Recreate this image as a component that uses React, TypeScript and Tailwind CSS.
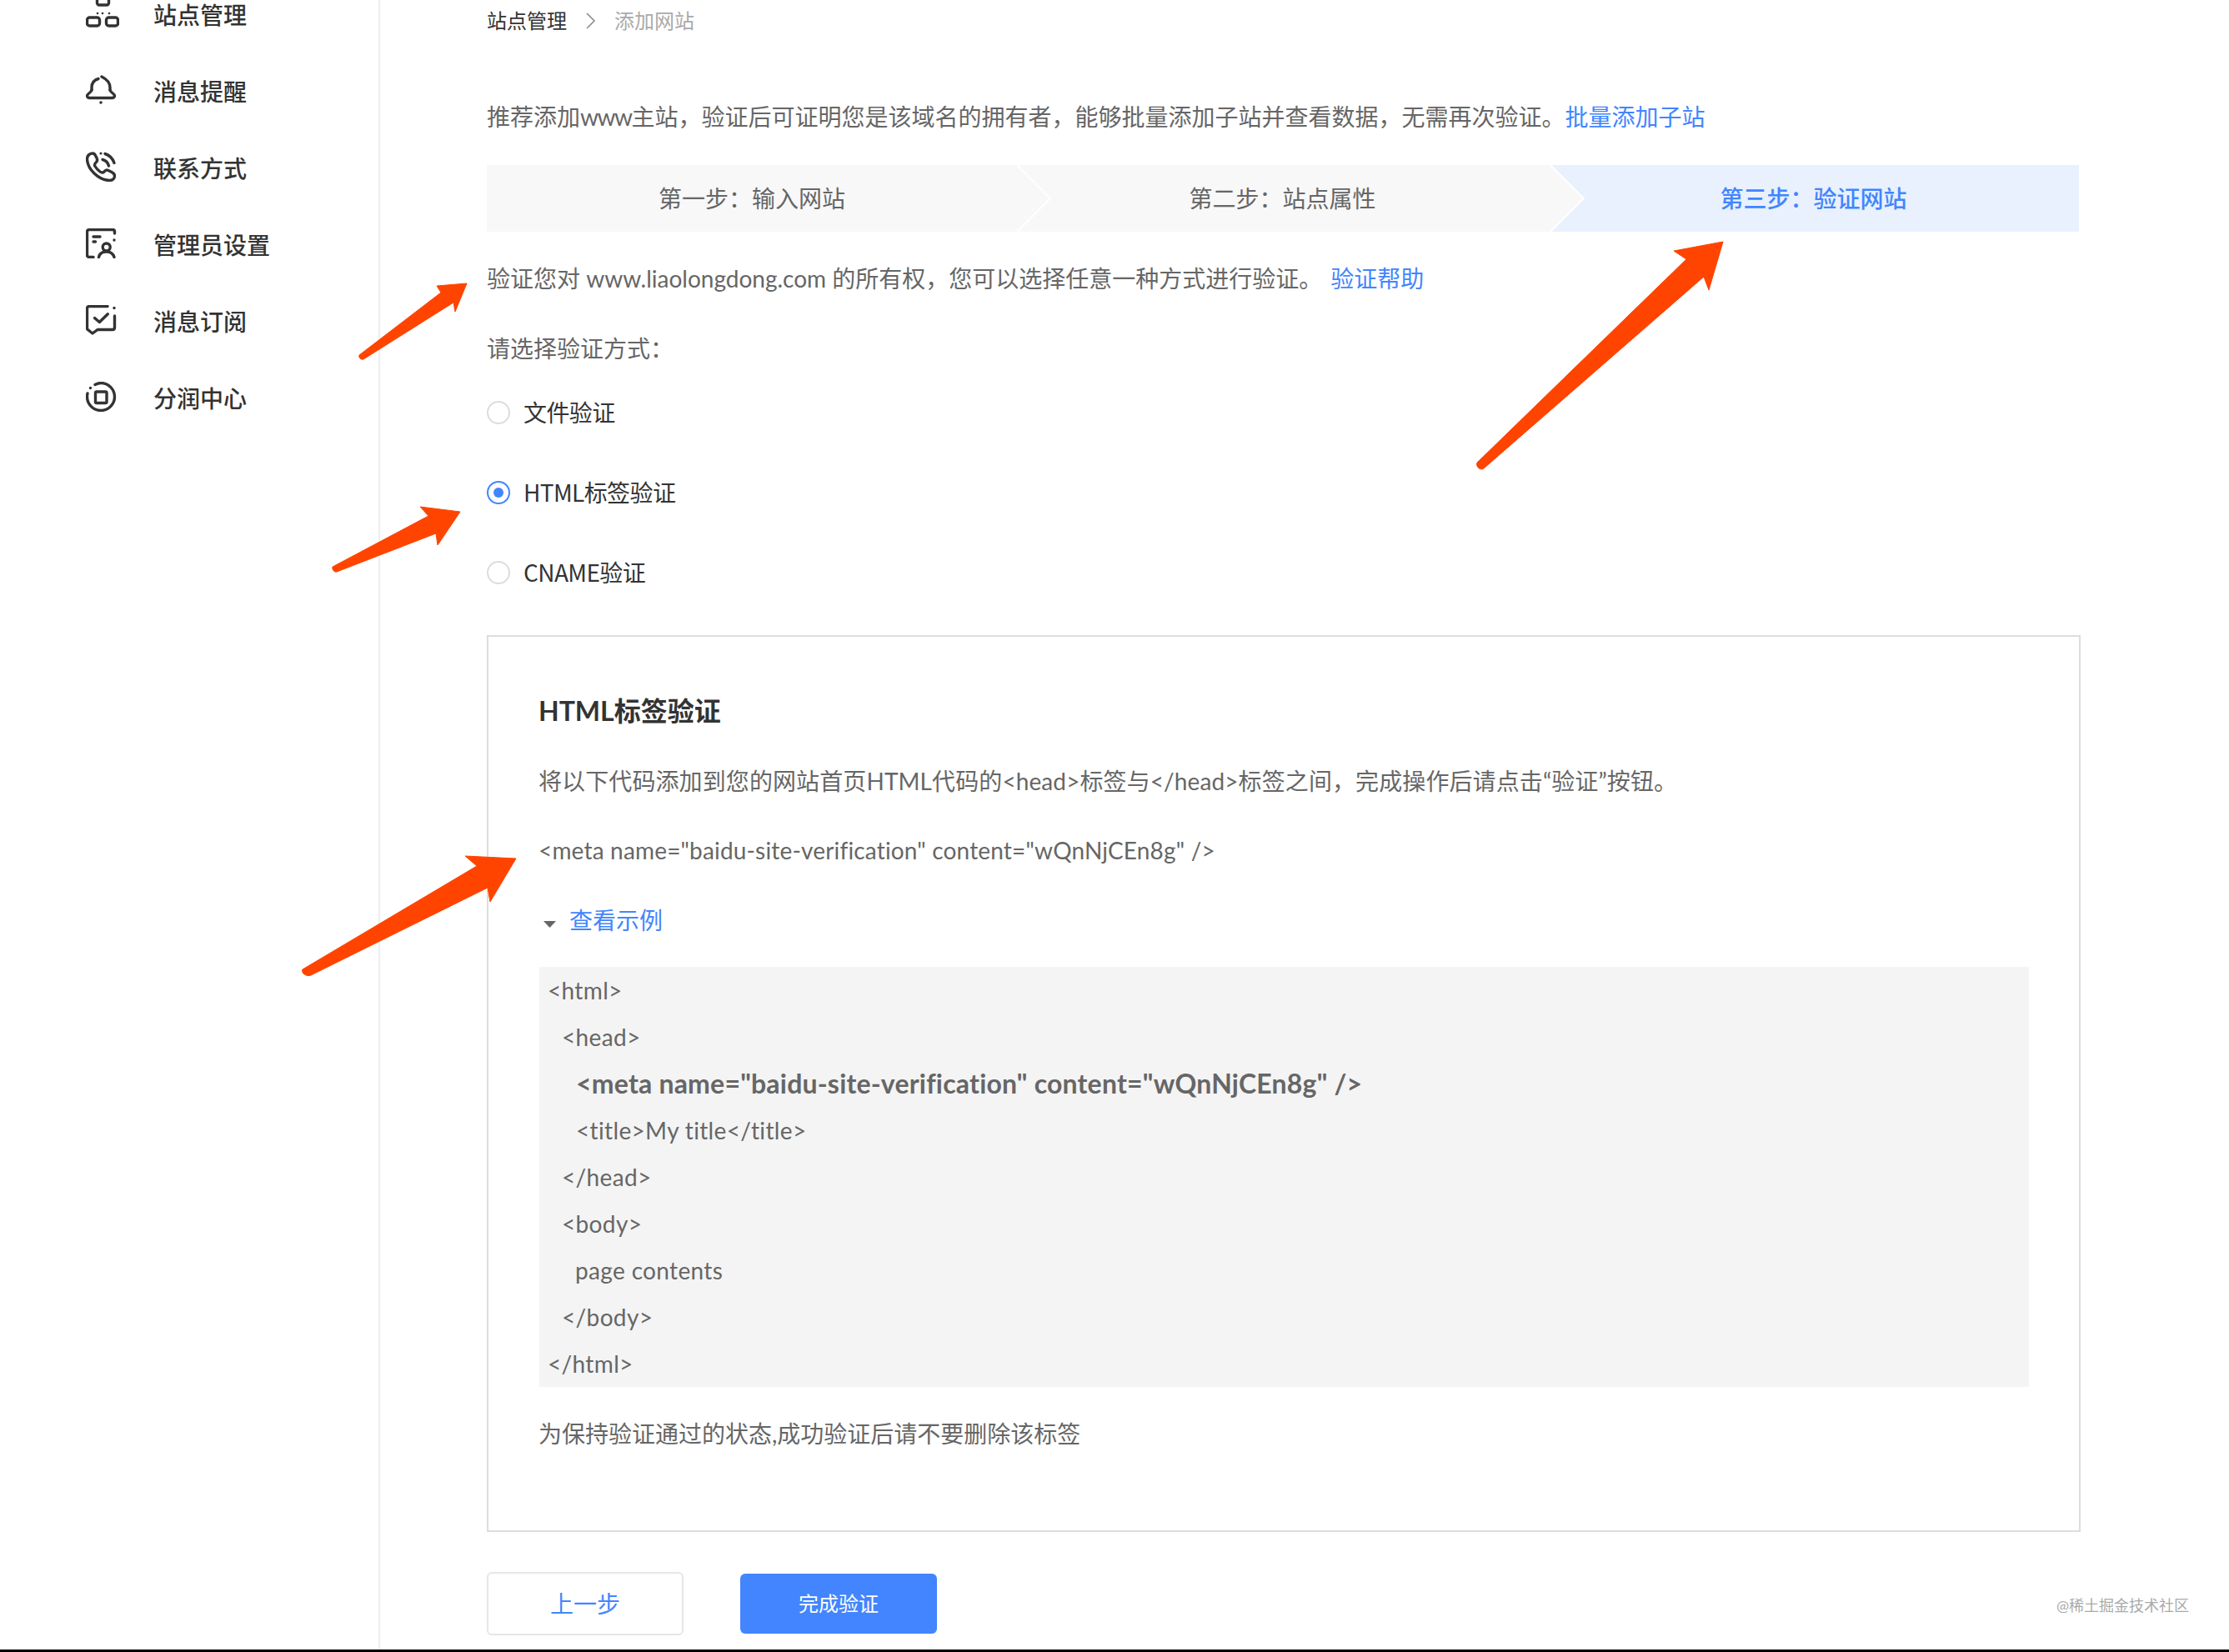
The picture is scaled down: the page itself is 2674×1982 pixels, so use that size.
import { ReactNode } from "react";

const iconClass = "fill-none stroke-[#333333] [stroke-width:3.4] [stroke-linecap:round] [stroke-linejoin:round]";

function SiteIcon() {
  return (
    <svg width="40" height="36" viewBox="0 0 40 36" className={iconClass}>
      <rect x="13.5" y="-1" width="14" height="9" rx="2.5" />
      <rect x="1.5" y="23" width="15" height="10" rx="3" />
      <rect x="24.5" y="23" width="14" height="10" rx="3" />
      <circle cx="14" cy="18" r="1.3" className="fill-[#333333] stroke-none" />
      <circle cx="20" cy="18" r="1.3" className="fill-[#333333] stroke-none" />
      <circle cx="28" cy="18" r="1.3" className="fill-[#333333] stroke-none" />
    </svg>
  );
}

function BellIcon() {
  return (
    <svg width="40" height="36" viewBox="0 0 40 36" className={iconClass}>
      <path d="M7 18 V15 C7 9 10 6 15 4.5" />
      <path d="M19 2 C25 5 29 9 29 15 V18" />
      <path d="M7 18 C7 21 1.5 22 1.5 25 C1.5 26.5 3 27.5 4.5 27.5 H31.5 C33 27.5 34.5 26.5 34.5 25 C34.5 22 29 21 29 18" />
      <circle cx="18" cy="33" r="1.8" className="fill-[#333333] stroke-none" />
    </svg>
  );
}

function PhoneIcon() {
  return (
    <svg width="40" height="36" viewBox="0 0 40 36" className={iconClass}>
      <path d="M8 2 C4 2 1.5 5 1.5 9 C2 21 15 34 28 34.5 C32 34.5 34.5 32 34.5 29 C34.5 27 33 25.5 31 24.5 L27 22.5 C25 21.5 23.5 22 22 24 C20.5 25.5 19 25.5 17 24 C14.5 22 12.5 20 11 17.5 C10 15.5 10.5 14 12.5 12.5 C14 11 14 9.5 13 7.5 L11.5 4.5 C10.8 3 9.5 2 8 2 Z" />
      <path d="M20 9.5 C24 10.5 26.5 13 27.5 17" />
      <path d="M23 2.5 C28 4 32 8 34 13.5" />
      <circle cx="18" cy="2" r="1.6" className="fill-[#333333] stroke-none" />
    </svg>
  );
}

function AdminIcon() {
  return (
    <svg width="40" height="36" viewBox="0 0 40 36" className={iconClass}>
      <path d="M9 34.5 H4 C2.5 34.5 1.5 33.5 1.5 32 V4 C1.5 2.5 2.5 1.5 4 1.5 H32 C33.5 1.5 34.5 2.5 34.5 4 V6" />
      <path d="M9 10 H17" />
      <path d="M9 16 H11.5" />
      <circle cx="24.7" cy="22.5" r="4.5" />
      <path d="M15.5 34.5 C16.5 30 20 28 24.7 28 C29 28 32.5 30 34 34.5" />
      <circle cx="34" cy="14" r="1.7" className="fill-[#333333] stroke-none" />
    </svg>
  );
}

function SubscribeIcon() {
  return (
    <svg width="40" height="36" viewBox="0 0 40 36" className={iconClass}>
      <path d="M26 1.5 H4 C2.5 1.5 1.5 2.5 1.5 4 V28 C1.5 29 2 29.5 3 30 L8 34 L14 29.5 H32 C33.5 29.5 34.5 28.5 34.5 27 V13" />
      <path d="M10.5 15.5 L16.3 20.5 L26.3 10.7" />
      <circle cx="34" cy="3.5" r="1.7" className="fill-[#333333] stroke-none" />
    </svg>
  );
}

function ShareIcon() {
  return (
    <svg width="40" height="36" viewBox="0 0 40 36" className={iconClass}>
      <path d="M11 3.5 C14 2 16 1.5 18 1.5 C27 1.5 34.5 9 34.5 18 C34.5 27 27 34.5 18 34.5 C9 34.5 1.5 27 1.5 18 C1.5 16.5 1.7 15 2 14" />
      <rect x="11.5" y="12" width="13.5" height="13.5" rx="1.5" />
      <circle cx="5.5" cy="7.5" r="1.7" className="fill-[#333333] stroke-none" />
    </svg>
  );
}

const navItems: { label: string; icon: ReactNode }[] = [
  { label: "站点管理", icon: <SiteIcon /> },
  { label: "消息提醒", icon: <BellIcon /> },
  { label: "联系方式", icon: <PhoneIcon /> },
  { label: "管理员设置", icon: <AdminIcon /> },
  { label: "消息订阅", icon: <SubscribeIcon /> },
  { label: "分润中心", icon: <ShareIcon /> },
];

const steps = [
  { label: "第一步：输入网站", active: false, chevron: true, width: "w-[636px]" },
  { label: "第二步：站点属性", active: false, chevron: true, width: "w-[640px] pr-[3px]" },
  { label: "第三步：验证网站", active: true, chevron: false, width: "w-[634px] pr-[3px]" },
];

const methods = [
  { label: "文件验证", checked: false },
  { label: "HTML标签验证", checked: true },
  { label: "CNAME验证", checked: false },
];

const codeLines = [
  { text: "<html>", cls: "" },
  { text: "<head>", cls: "pl-[17px]" },
  { text: '<meta name="baidu-site-verification" content="wQnNjCEn8g" />', cls: "pl-[34px] text-[32px] font-bold tracking-[0.2px]" },
  { text: "<title>My title</title>", cls: "pl-[34px]" },
  { text: "</head>", cls: "pl-[17px]" },
  { text: "<body>", cls: "pl-[17px]" },
  { text: "page contents", cls: "pl-[33px]" },
  { text: "</body>", cls: "pl-[17px]" },
  { text: "</html>", cls: "" },
];

function Sidebar() {
  return (
    <aside className="w-[456px] shrink-0 border-r-2 border-[#eeeeee] pl-[103px] -mt-[28px]">
      {navItems.map(item => (
        <div key={item.label} className="flex h-[92px] items-center">
          <span className="w-[81px] -mt-[4px] shrink-0">{item.icon}</span>
          <span className="pb-[1px] text-[28px] font-medium leading-[32px] text-[#333333]">{item.label}</span>
        </div>
      ))}
    </aside>
  );
}

function Steps() {
  return (
    <div className="flex h-[80px] w-[1910px]">
      {steps.map(step => (
        <div
          key={step.label}
          className={`relative flex items-center justify-center pb-[1px] text-[28px] ${step.width} ${
            step.active ? "bg-[#e8f1fd] font-medium text-[#4285ff]" : "bg-[#f8f8f8] text-[#666666]"
          }`}
        >
          {step.label}
          {step.chevron && (
            <svg width="42" height="80" viewBox="0 0 42 80" className="absolute left-full top-0 z-10">
              <path d="M0 0 L40 40 L0 80 Z" fill="#f8f8f8" />
              <path d="M0 0 L40 40 L0 80" fill="none" stroke="#ffffff" strokeWidth="2" />
            </svg>
          )}
        </div>
      ))}
    </div>
  );
}

function Radio({ checked }: { checked: boolean }) {
  return (
    <span
      className={`flex h-[28px] w-[28px] items-center justify-center rounded-full border-2 ${
        checked ? "border-[#4285ff]" : "border-[#dddddd]"
      }`}
    >
      {checked && <span className="h-[12px] w-[12px] rounded-full bg-[#4285ff]" />}
    </span>
  );
}

function HtmlPanel() {
  return (
    <section className="mt-[55px] h-[1076px] w-[1912px] border-2 border-[#dddddd] pl-[60px] pt-[69px] text-[28px] text-[#666666]">
      <h3 className="text-[32px] font-bold leading-[40px] text-[#333333]">HTML标签验证</h3>
      <p className="mt-[46px] leading-[36px] tracking-[0.1px]">
        将以下代码添加到您的网站首页HTML代码的&lt;head&gt;标签与&lt;/head&gt;标签之间，完成操作后请点击“验证”按钮。
      </p>
      <p className="mt-[47px] leading-[36px] tracking-[0.17px]">&lt;meta name="baidu-site-verification" content="wQnNjCEn8g" /&gt;</p>
      <div className="mt-[48px] flex h-[36px] items-center">
        <svg width="15" height="8" viewBox="0 0 15 8" className="ml-[6px] mt-[10px]">
          <path d="M0 0 H15 L7.5 8 Z" fill="#666666" />
        </svg>
        <span className="ml-[16px] text-[#4285ff]">查看示例</span>
      </div>
      <div className="ml-[1px] mt-[38px] w-[1787px] bg-[#f4f4f4] pl-[10px] tracking-[0.35px]">
        {codeLines.map(line => (
          <div key={line.text} className={`h-[56px] leading-[56px] ${line.cls}`}>
            {line.text}
          </div>
        ))}
      </div>
      <p className="mt-[38px] leading-[36px]">为保持验证通过的状态,成功验证后请不要删除该标签</p>
    </section>
  );
}

function Arrows() {
  return (
    <svg width="2674" height="1982" viewBox="0 0 2674 1982" className="pointer-events-none absolute left-0 top-0 z-20">
      <g fill="#ff4400" stroke="#ff4400" strokeWidth="1" strokeLinejoin="round">
        <path d="M431 426 L529 351 L524 343 L560 340 L546 374 L544 363 L436 431 C433 432 430 429 431 426 Z" />
        <path d="M399 680 L514 619 L504 608 L552 614 L525 654 L523 640 L404 686 C401 687 398 683 399 680 Z" />
        <path d="M1772 555 L2023 311 L2008 301 L2067 290 L2050 348 L2044 332 L1780 562 C1776 565 1770 560 1772 555 Z" />
        <path d="M363 1163 L572 1039 L558 1027 L619 1030 L588 1082 L585 1065 L373 1170 C368 1172 361 1168 363 1163 Z" />
      </g>
    </svg>
  );
}

export default function App() {
  return (
    <div className="relative h-[1982px] w-[2674px] overflow-hidden bg-white font-['Lato','Noto_Sans_CJK_SC',sans-serif]">
      <div className="flex h-[1979px]">
        <Sidebar />
        <main className="pl-[128px] text-[#666666]">
          <div className="flex h-[50px] items-center text-[24px]">
            <span className="text-[#333333]">站点管理</span>
            <svg width="12" height="20" viewBox="0 0 12 20" className="ml-[23px] mr-[22px]">
              <path d="M1 1 L10 10 L1 19" fill="none" stroke="#888888" strokeWidth="1.5" />
            </svg>
            <span className="text-[#aaaaaa]">添加网站</span>
          </div>
          <p className="mt-[72px] text-[28px] leading-[36px]">
            推荐添加<span className="tracking-[-1.5px]">www</span>主站，验证后可证明您是该域名的拥有者，能够批量添加子站并查看数据，无需再次验证。
            <a className="text-[#4285ff]">批量添加子站</a>
          </p>
          <div className="mt-[40px]">
            <Steps />
          </div>
          <p className="mt-[38px] text-[28px] leading-[36px]">
            验证您对 www.liaolongdong.com 的所有权，您可以选择任意一种方式进行验证。
            <a className="ml-[10px] text-[#4285ff]">验证帮助</a>
          </p>
          <p className="mt-[48px] text-[28px] leading-[36px]">请选择验证方式：</p>
          <div className="mt-[39px] flex flex-col gap-[56px]">
            {methods.map(m => (
              <label key={m.label} className="flex h-[40px] items-center gap-[16px] text-[28px] text-[#333333]">
                <Radio checked={m.checked} />
                <span className="pb-[3px] font-['Noto_Sans_CJK_SC',sans-serif] tracking-[-0.6px]">{m.label}</span>
              </label>
            ))}
          </div>
          <HtmlPanel />
          <div className="mt-[48px] flex items-center gap-[68px]">
            <button className="h-[76px] w-[236px] rounded-[6px] border-2 border-[#e6e6e6] bg-white text-[28px] text-[#4285ff]">
              上一步
            </button>
            <button className="h-[72px] w-[236px] rounded-[6px] bg-[#4285ff] text-[24px] text-white">完成验证</button>
          </div>
        </main>
      </div>
      <div className="h-[3px] bg-black" />
      <Arrows />
      <span className="absolute left-[2467px] top-[1912px] text-[18px] leading-[28px] text-[#aaaaaa]">@稀土掘金技术社区</span>
    </div>
  );
}
